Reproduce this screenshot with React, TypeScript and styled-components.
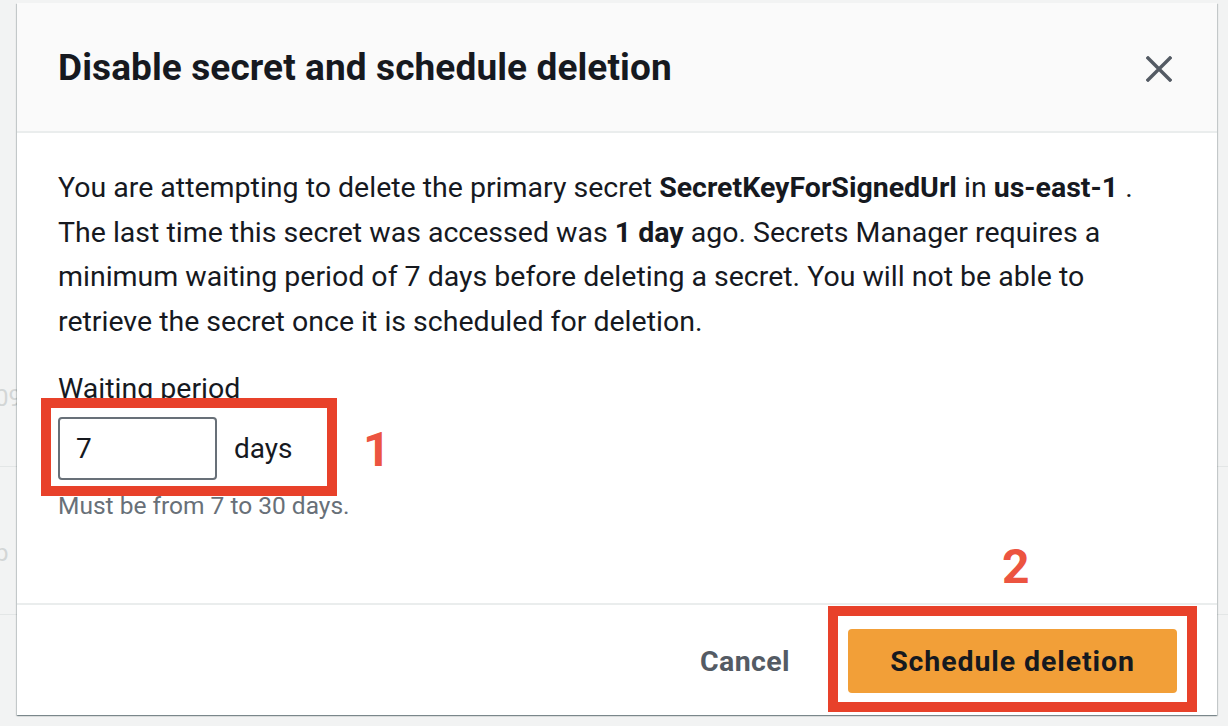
import styled, { createGlobalStyle } from "styled-components";

const GlobalStyle = createGlobalStyle`
  html, body {
    margin: 0;
    padding: 0;
    background: #f2f3f3;
  }
  body {
    font-family: Roboto, "Open Sans", Arial, sans-serif;
    color: #16191f;
  }
`;

const CloseIcon = () => (
  <svg width="26" height="26" viewBox="0 0 26 26" fill="none">
    <path d="M2 2 L24 24 M24 2 L2 24" stroke="#545b64" strokeWidth="3.4" strokeLinecap="square" />
  </svg>
);

const App = () => {
  return (
    <Page>
      <GlobalStyle />
      <Backdrop>
        <BackRow $height={466}>
          <BackText $top={384}>09</BackText>
        </BackRow>
        <BackRow $height={147}>
          <BackText $top={72}>p</BackText>
        </BackRow>
        <BackRow $height={112} />
      </Backdrop>

      <Modal>
        <Header>
          <Title>Disable secret and schedule deletion</Title>
          <CloseButton aria-label="Close">
            <CloseIcon />
          </CloseButton>
        </Header>

        <Body>
          <Text>
            You are attempting to delete the primary secret <b>SecretKeyForSignedUrl</b> in{" "}
            <b>us-east-1</b> .
            <br />
            The last time this secret was accessed was <b>1 day</b> ago. Secrets Manager requires a
            <br />
            minimum waiting period of 7 days before deleting a secret. You will not be able to
            <br />
            retrieve the secret once it is scheduled for deletion.
          </Text>

          <Label>Waiting period</Label>
          <FieldRow>
            <Highlight $top={-19} $left={-17} $width={296} $height={98} />
            <Input defaultValue="7" />
            <Unit>days</Unit>
            <Marker $top={9} $left={305}>1</Marker>
          </FieldRow>
          <Hint>Must be from 7 to 30 days.</Hint>
        </Body>

        <Footer>
          <LinkButton>Cancel</LinkButton>
          <PrimaryWrap>
            <Highlight $top={-23} $left={-20} $width={369} $height={106} />
            <Marker $top={-86} $left={154}>2</Marker>
            <PrimaryButton>Schedule deletion</PrimaryButton>
          </PrimaryWrap>
        </Footer>
      </Modal>
    </Page>
  );
};

const Page = styled.div`
  position: relative;
  width: 100%;
  height: 726px;
  overflow: hidden;
  background: #f2f3f3;
`;

const Backdrop = styled.div`
  display: flex;
  flex-direction: column;
`;

const BackRow = styled.div<{ $height: number }>`
  position: relative;
  height: ${(p) => p.$height}px;
  border-bottom: 1px solid #e3e6e6;
`;

const BackText = styled.span<{ $top: number }>`
  position: absolute;
  top: ${(p) => p.$top}px;
  left: -5px;
  font-size: 24px;
  color: #d3d6d6;
`;

const Modal = styled.div`
  position: absolute;
  left: 17px;
  top: 3px;
  width: 1200px;
  height: 712px;
  display: flex;
  flex-direction: column;
  background: #ffffff;
  box-shadow: 0 1px 1px 0 rgba(0, 28, 36, 0.3), 1px 1px 1px 0 rgba(0, 28, 36, 0.15),
    -1px 1px 1px 0 rgba(0, 28, 36, 0.15);
`;

const Header = styled.div`
  height: 128px;
  flex-shrink: 0;
  display: flex;
  align-items: center;
  justify-content: space-between;
  padding: 0 45px 0 41px;
  background: #fafafa;
  border-bottom: 2px solid #eaeded;
`;

const Title = styled.h1`
  margin: 0;
  font-size: 37px;
  font-weight: 700;
  letter-spacing: 0.1px;
  color: #16191f;
`;

const CloseButton = styled.button`
  display: flex;
  padding: 0;
  margin-top: 4px;
  border: none;
  background: none;
  cursor: pointer;
`;

const Body = styled.div`
  flex: 1;
  padding: 33px 41px 0;
`;

const Text = styled.p`
  margin: 0;
  font-size: 28.5px;
  line-height: 44.5px;
  color: #16191f;

  b {
    font-weight: 700;
  }
`;

const Label = styled.div`
  margin-top: 23px;
  font-size: 28.5px;
  line-height: 44px;
  color: #16191f;
`;

const FieldRow = styled.div`
  position: relative;
  margin-top: 6px;
  display: flex;
  align-items: center;
  gap: 17px;
`;

const Input = styled.input`
  box-sizing: border-box;
  width: 159px;
  height: 63px;
  padding: 0 16px;
  border: 2px solid #687078;
  border-radius: 4px;
  font-family: inherit;
  font-size: 28px;
  color: #16191f;
  outline: none;
`;

const Unit = styled.span`
  font-size: 28px;
  color: #16191f;
`;

const Hint = styled.div`
  margin-top: 10px;
  font-size: 24.5px;
  line-height: 32px;
  color: #687078;
`;

const Highlight = styled.div<{ $top: number; $left: number; $width: number; $height: number }>`
  position: absolute;
  top: ${(p) => p.$top}px;
  left: ${(p) => p.$left}px;
  width: ${(p) => p.$width}px;
  height: ${(p) => p.$height}px;
  box-sizing: border-box;
  border: 10px solid #e8412a;
  pointer-events: none;
`;

const Marker = styled.span<{ $top: number; $left: number }>`
  position: absolute;
  top: ${(p) => p.$top}px;
  left: ${(p) => p.$left}px;
  font-family: Roboto, Arial, sans-serif;
  font-size: 48px;
  line-height: 48px;
  font-weight: 700;
  color: #ec5440;
`;

const Footer = styled.div`
  flex-shrink: 0;
  display: flex;
  align-items: center;
  justify-content: flex-end;
  gap: 38px;
  padding: 24px 40px 22px;
  border-top: 2px solid #eaeded;
`;

const LinkButton = styled.button`
  padding: 0 20px;
  border: none;
  background: none;
  font-family: inherit;
  font-size: 28.5px;
  font-weight: 700;
  letter-spacing: 0.4px;
  color: #545b64;
  cursor: pointer;
`;

const PrimaryWrap = styled.div`
  position: relative;
  display: flex;
`;

const PrimaryButton = styled.button`
  width: 329px;
  height: 64px;
  border: none;
  border-radius: 4px;
  background: #f29f38;
  font-family: inherit;
  font-size: 28.5px;
  font-weight: 700;
  letter-spacing: 0.9px;
  color: #16191f;
  cursor: pointer;
`;

export default App;
